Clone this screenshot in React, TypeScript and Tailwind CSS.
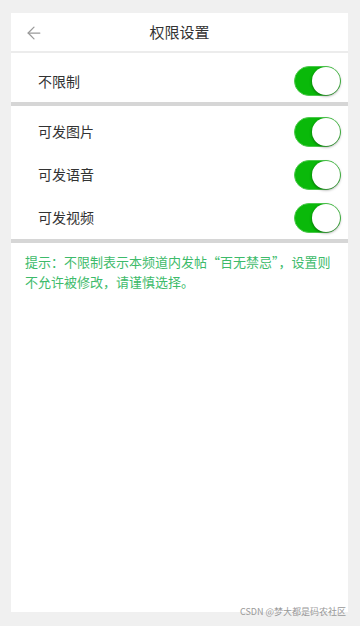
import { ArrowLeft } from "lucide-react";

const font = { fontFamily: '"Noto Sans CJK SC", "Noto Sans", sans-serif' };

function Toggle() {
    return (
        <div className="relative h-[30px] w-[47px] rounded-full border border-[#4cc94c] bg-[#0ab90a]">
            <div className="absolute right-0 top-0 h-[28px] w-[28px] rounded-full bg-white shadow-[0_1px_3px_rgba(0,0,0,0.45)]" />
        </div>
    );
}

function Row({ label, height }: { label: string; height: string }) {
    return (
        <div className={`flex items-center justify-between pl-[27px] pr-[7px] ${height}`}>
            <span className="text-[14px] text-[#333]">{label}</span>
            <Toggle />
        </div>
    );
}

export default function App() {
    return (
        <div className="relative min-h-[626px] bg-[#f0f0f0] pl-[11px] pr-[12px] pt-[13px]" style={font}>
            <div className="flex h-[599px] flex-col bg-white">
                <div className="relative flex h-[40px] items-center justify-center border-b-2 border-[#ececec]">
                    <ArrowLeft className="absolute left-[13px] top-[10px] text-[#999]" size={20} strokeWidth={1.5} />
                    <span className="text-[15px] text-[#333]">权限设置</span>
                </div>
                <div className="pt-[7px]">
                    <Row label="不限制" height="h-[42px]" />
                </div>
                <div className="h-[4px] bg-[#d6d6d6]" />
                <div className="pt-[4px]">
                    <Row label="可发图片" height="h-[43px]" />
                    <Row label="可发语音" height="h-[43px]" />
                    <Row label="可发视频" height="h-[43px]" />
                </div>
                <div className="h-[4px] bg-[#d6d6d6]" />
                <p className="px-[14px] pt-[9px] text-[13px] leading-[20px] text-[#3dbb6a]">
                    提示：不限制表示本频道内发帖“百无禁忌”，设置则不允许被修改，请谨慎选择。
                </p>
            </div>
            <span className="absolute bottom-[8px] right-[14px] text-[9px] text-[#999]">CSDN @梦大都是码农社区</span>
        </div>
    );
}
